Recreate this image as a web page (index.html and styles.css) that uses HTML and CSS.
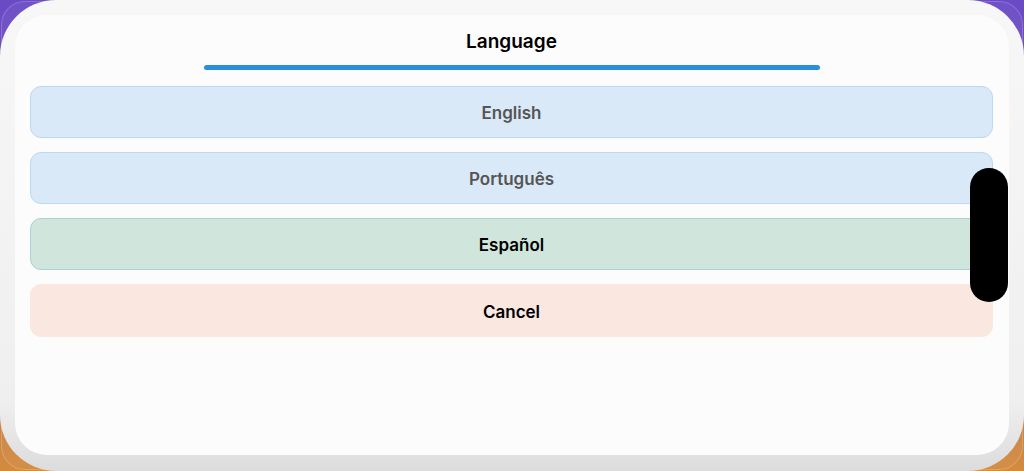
FILE: index.html
```html
<!DOCTYPE html>
<html lang="en">
<head>
<meta charset="utf-8">
<title>Language</title>
<link rel="stylesheet" href="styles.css">
</head>
<body>
<div class="screen">
  <div class="ghost"></div>
  <div class="outer">
    <div class="sheet">
      <div class="header">
        <h1 class="title">Language</h1>
        <div class="progress"></div>
      </div>
      <div class="options">
        <button class="opt opt-blue">English</button>
        <button class="opt opt-blue">Português</button>
        <button class="opt opt-green">Español</button>
        <button class="opt opt-red">Cancel</button>
      </div>
    </div>
  </div>
  <div class="island"></div>
</div>
</body>
</html>
```
FILE: styles.css
```css
* { box-sizing: border-box; }
html, body { margin: 0; padding: 0; }
body {
  width: 1024px;
  height: 471px;
  overflow: hidden;
  font-family: Inter, "Noto Sans", "Liberation Sans", sans-serif;
}
.screen {
  position: relative;
  width: 1024px;
  height: 471px;
  background: linear-gradient(180deg, #6a4ac6 0%, #7a58b8 30%, #b9744f 70%, #d38b3f 100%);
  overflow: hidden;
}
.ghost {
  position: absolute;
  left: 1px;
  top: 1px;
  width: 1022px;
  height: 469px;
  border-radius: 24px;
  border: 1px solid rgba(255,255,255,0.18);
  background: rgba(255,255,255,0.04);
}
.outer {
  position: relative;
  width: 1024px;
  height: 471px;
  border-radius: 56px;
  background: linear-gradient(180deg, #f7f7f7 0%, #efefef 85%, #dcdcdc 100%);
  padding: 15px 15px 16px 15px;
  display: flex;
}
.sheet {
  flex: 1;
  background: #fcfcfc;
  border-radius: 32px;
  display: flex;
  flex-direction: column;
  padding: 0 16px 0 15px;
}
.header {
  display: flex;
  flex-direction: column;
  align-items: center;
  padding-top: 15px;
}
.title {
  margin: 0;
  font-size: 19px;
  line-height: 24px;
  font-weight: 600;
  color: #000;
}
.progress {
  margin-top: 11px;
  width: 616px;
  height: 5px;
  border-radius: 3px;
  background: #2a8fda;
}
.options {
  margin-top: 16px;
  display: flex;
  flex-direction: column;
  gap: 14px;
}
.opt {
  height: 52px;
  border-radius: 11px;
  border: 1px solid transparent;
  font-family: inherit;
  font-size: 17px;
  font-weight: 600;
  padding: 2px 0 0 0;
  cursor: pointer;
}
.opt-blue {
  background: #dae9f7;
  border-color: #bcd9f0;
  color: #555555;
}
.opt-green {
  background: #d0e6dc;
  border-color: #a8d2d6;
  color: #000;
}
.opt-red {
  background: #fae7e0;
  border-color: #fae7e0;
  color: #000;
  height: 53px;
}
.island {
  position: absolute;
  left: 970px;
  top: 168px;
  width: 38px;
  height: 134px;
  border-radius: 19px;
  background: #000;
}
```
